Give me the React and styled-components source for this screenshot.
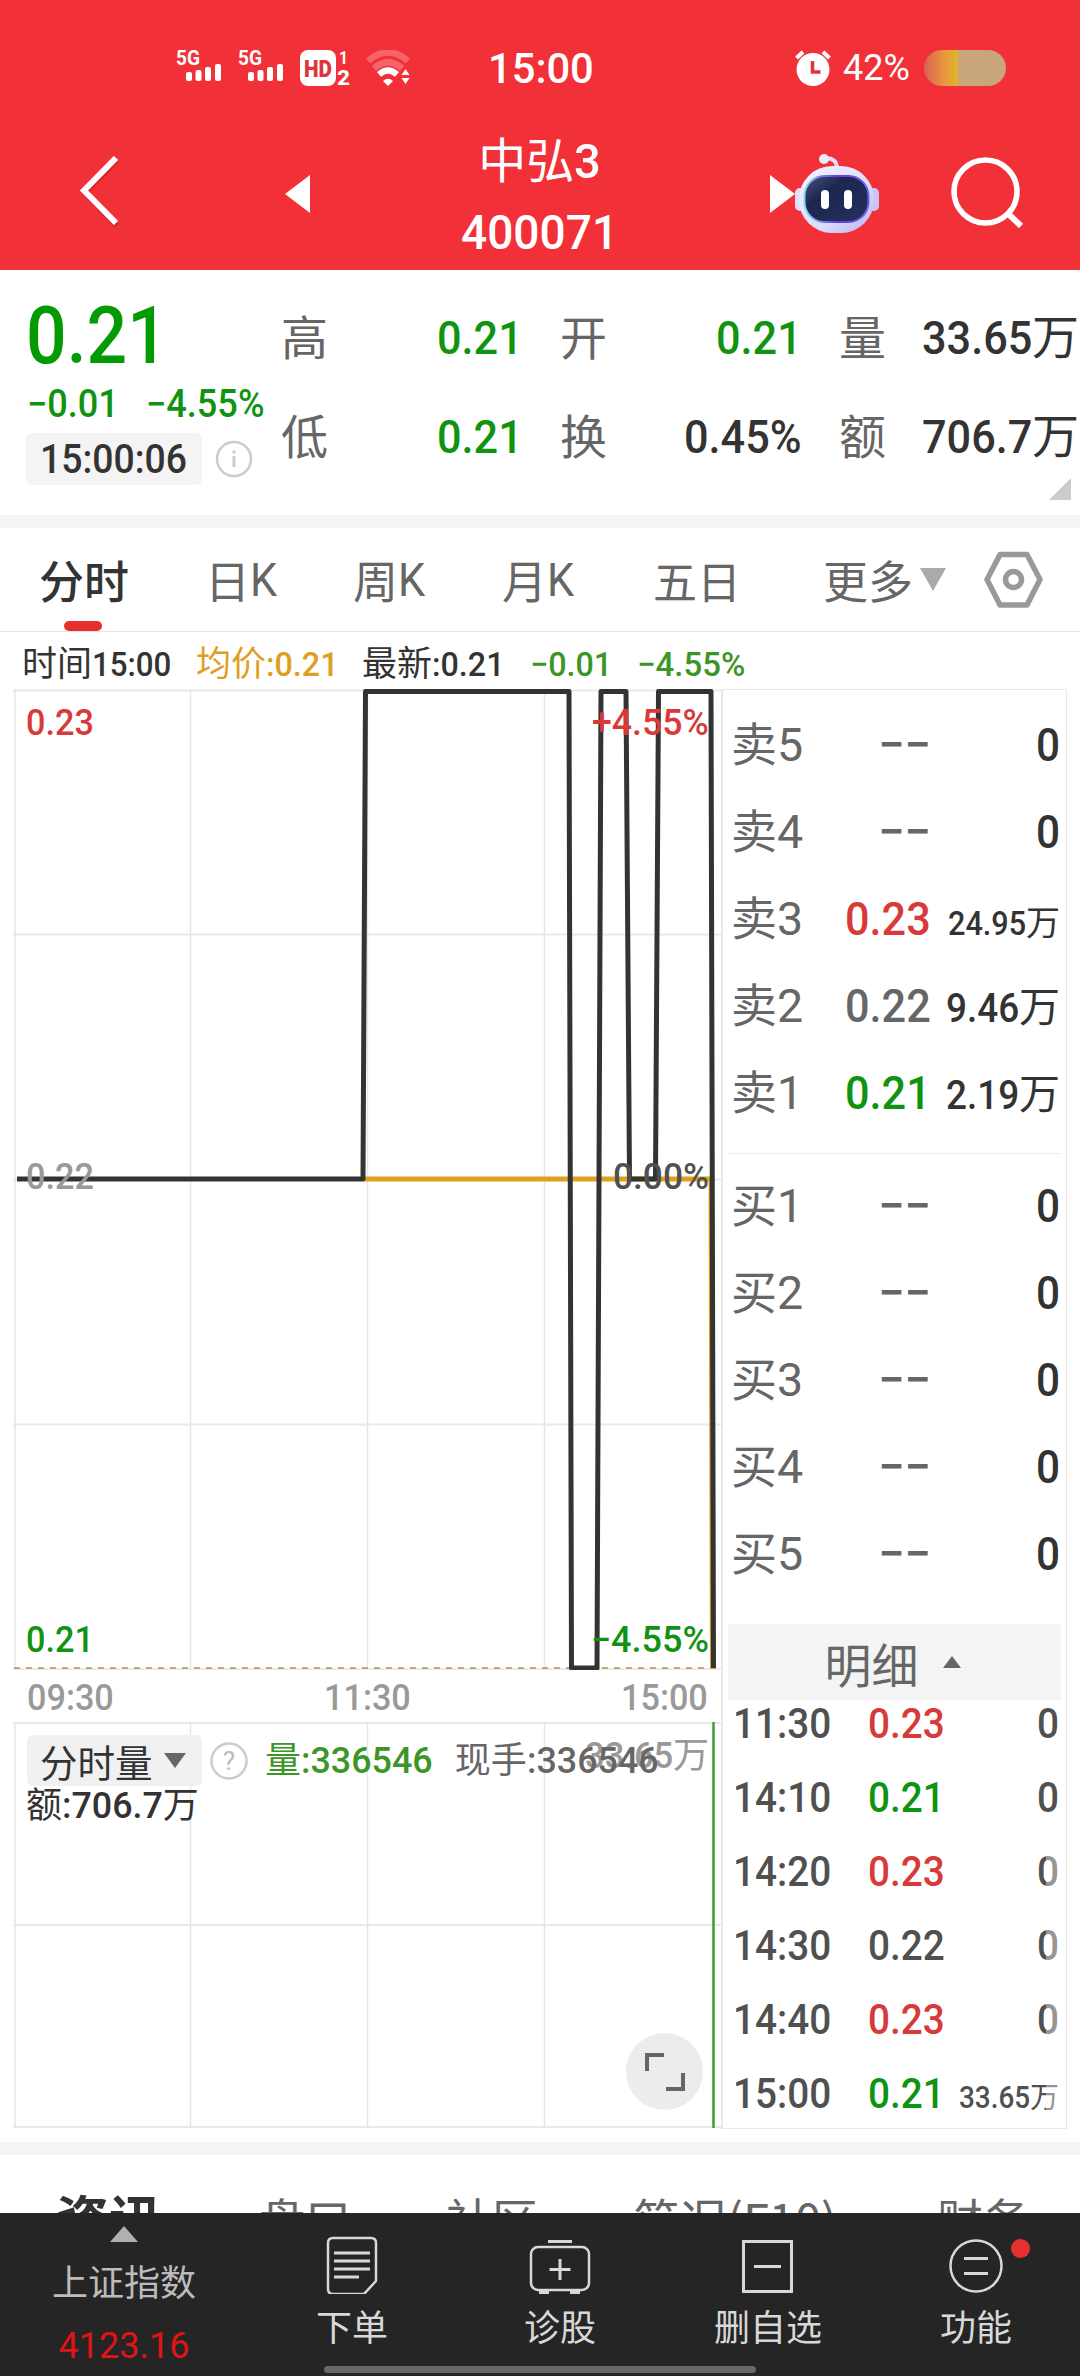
import React from 'react';
import styled, { createGlobalStyle } from 'styled-components';

const GlobalStyle = createGlobalStyle`
  * {
    box-sizing: border-box;
  }

  body {
    margin: 0;
    background: #fff;
    font-family: Roboto, 'Noto Sans CJK SC', sans-serif;
    color: #333;
  }
`;

const RED = '#d83a3a';
const GREEN = '#0f9310';
const SOFT_GREEN = '#3b9527';
const GRAY = '#666';

const Screen = styled.div`
  width: 1080px;
  height: 2376px;
  display: flex;
  flex-direction: column;
  overflow: hidden;
  background: #fff;
`;

// advance widths in em, used to give back the room a squeezed number leaves
const ADVANCE = { '.': 0.27, ':': 0.25, '%': 0.735 };
const emWidth = (text) => [...String(text)].reduce((sum, c) => sum + (ADVANCE[c] || 0.565), 0);

const Num = styled.span`
  display: inline-block;
  font-size: ${(p) => p.$size || 47}px;
  font-weight: ${(p) => p.$weight || 500};
  color: ${(p) => p.$color || 'inherit'};
  white-space: nowrap;
  transform: scaleX(${(p) => p.$k || 0.92});
  transform-origin: 0 50%;
  margin-right: ${(p) => (-emWidth(p.children) * (1 - (p.$k || 0.92))).toFixed(3)}em;
`;

const Cn = styled.span`
  font-family: 'Noto Sans CJK SC', sans-serif;
  font-size: ${(p) => p.$size || 47}px;
  font-weight: ${(p) => p.$weight || 400};
  line-height: 1;
  color: ${(p) => p.$color || 'inherit'};
  white-space: nowrap;
`;

const Pair = styled.div`
  color: ${(p) => p.$color || 'inherit'};
  white-space: nowrap;
`;

/* ---------- top ---------- */

const Top = styled.header`
  height: 270px;
  flex: none;
  background: #f13038;
  color: #fff;
`;

const StatusBar = styled.div`
  height: 118px;
  padding: 18px 77px 0 176px;
  display: grid;
  grid-template-columns: 312px 307px 1fr;
  align-items: center;
`;

const StatusGroup = styled.div`
  display: flex;
  align-items: center;
`;

const Signal = styled.svg`
  width: 62px;
  height: 40px;
`;

const Battery = styled.div`
  width: 82px;
  height: 36px;
  margin-left: 14px;
  border-radius: 18px;
  background: linear-gradient(90deg, #d9605a 0, #e8963c 20px, #dfb72c 34px, #c9a57c 34px);
`;

const TitleBar = styled.div`
  height: 152px;
  display: grid;
  grid-template-columns: 285px 178px 153px 154px 310px;
  align-items: center;
`;

const TitleText = styled.div`
  display: flex;
  flex-direction: column;
  align-items: center;
  line-height: 71px;
  padding-top: 6px;
`;

const TitleLine = styled.div`
  height: 71px;
  white-space: nowrap;
`;

const TitleIcons = styled.div`
  display: flex;
  align-items: center;
`;

/* ---------- quote ---------- */

const Quote = styled.section`
  height: 245px;
  flex: none;
  display: flex;
  position: relative;
`;

const PriceColumn = styled.div`
  width: 281px;
  padding: 28px 0 0 26px;
`;

const BigPrice = styled.div`
  height: 76px;
  line-height: 76px;
`;

const Changes = styled.div`
  display: flex;
  gap: 27px;
  height: 59px;
  line-height: 60px;
  padding-left: 1px;
`;

const ClockRow = styled.div`
  display: flex;
  align-items: center;
`;

const ClockChip = styled.div`
  width: 176px;
  height: 52px;
  line-height: 53px;
  text-align: center;
  border-radius: 6px;
  background: #f4f4f4;
`;

const Stats = styled.div`
  flex: 1;
  padding-top: 18px;
  display: grid;
  grid-template-columns: 242px 242px 240px;
  grid-template-rows: 99px 99px;
  column-gap: 37px;
`;

const Stat = styled.div`
  display: flex;
  justify-content: space-between;
  align-items: center;

  > ${Cn} {
    margin-top: -6px;
  }
`;

const Corner = styled.div`
  position: absolute;
  right: 9px;
  bottom: 15px;
  border-left: 22px solid transparent;
  border-bottom: 22px solid #ccc;
`;

const Divider = styled.div`
  height: 13px;
  flex: none;
  background: #f4f4f4;
`;

/* ---------- period tabs ---------- */

const Tabs = styled.nav`
  height: 104px;
  flex: none;
  display: grid;
  grid-template-columns: 166px 148px 149px 151px 170px 161px 1fr;
  padding-left: 39px;
  border-bottom: 1px solid #e5e5e5;
  white-space: nowrap;
`;

const Tab = styled.div`
  position: relative;
  display: flex;
  align-items: center;
  color: ${(p) => (p.$active ? '#333' : GRAY)};

  &::after {
    content: '';
    display: ${(p) => (p.$active ? 'block' : 'none')};
    position: absolute;
    left: 25px;
    bottom: 0;
    width: 38px;
    height: 10px;
    border-radius: 5px;
    background: #e63030;
  }
`;

const Down = styled.i`
  border-left: ${(p) => p.$w / 2}px solid transparent;
  border-right: ${(p) => p.$w / 2}px solid transparent;
  border-top: ${(p) => p.$h}px solid ${(p) => p.$color};
`;

const Up = styled.i`
  border-left: ${(p) => p.$w / 2}px solid transparent;
  border-right: ${(p) => p.$w / 2}px solid transparent;
  border-bottom: ${(p) => p.$h}px solid ${(p) => p.$color};
`;

const Summary = styled.div`
  height: 57px;
  flex: none;
  padding: 6px 0 0 22px;
  display: grid;
  grid-template-columns: 174px 166px 168px 107px 1fr;
  align-items: center;
  white-space: nowrap;
`;

/* ---------- chart + order book ---------- */

const Board = styled.section`
  height: 1453px;
  flex: none;
  display: flex;
  padding: 0 13px;
`;

const Charts = styled.div`
  width: 708px;
  position: relative;
`;

const ChartSvg = styled.svg`
  display: block;
  width: 708px;
  height: ${(p) => p.$h}px;
`;

const TimeAxis = styled.div`
  height: 52px;
  padding: 3px 13px 0 14px;
  display: flex;
  justify-content: space-between;
  align-items: center;
  color: #999;
`;

const ChartLabel = styled.div`
  position: absolute;
  ${(p) => (p.$right ? 'right: 12px' : 'left: 13px')};
  top: ${(p) => p.$top}px;
  height: 50px;
  line-height: 50px;
  color: ${(p) => p.$color || 'inherit'};
  white-space: nowrap;
`;

const VolumeHead = styled.div`
  position: absolute;
  left: 14px;
  top: 1046px;
  height: 51px;
  display: flex;
  align-items: center;
  white-space: nowrap;
`;

const TypeChip = styled.div`
  width: 175px;
  height: 51px;
  padding-left: 13px;
  display: flex;
  align-items: center;
  gap: 11px;
  border-radius: 6px;
  background: #f1f1f1;
`;

const Expand = styled.div`
  position: absolute;
  left: 613px;
  top: 1344px;
  width: 77px;
  height: 77px;
  display: grid;
  place-items: center;
  border-radius: 50%;
  background: #ececec;
`;

const Book = styled.div`
  width: 346px;
  height: 1440px;
  border: 1px solid #e8e8e8;
  border-left: 2px solid #e8e8e8;
  padding: 11px 5px 0;
`;

const Side = styled.div`
  height: 453px;
  margin-bottom: ${(p) => (p.$line ? '8px' : '9px')};
  border-bottom: ${(p) => (p.$line ? '1px solid #ececec' : '0')};
`;

const Cell = styled.div`
  text-align: ${(p) => (p.$right ? 'right' : 'left')};
`;

const Level = styled.div`
  height: 87px;
  line-height: 87px;
  padding: 0 1px 0 3px;
  display: grid;
  grid-template-columns: 108px 92px 1fr;
  align-items: baseline;
  white-space: nowrap;
`;

const DetailBar = styled.div`
  height: 76px;
  display: flex;
  align-items: center;
  justify-content: center;
  gap: 24px;
  padding-right: 4px;
  background: #f4f4f4;
`;

const Ticks = styled.div`
  position: relative;
  height: 428px;
  overflow: hidden;

  &::after {
    content: '';
    position: absolute;
    right: 0;
    top: 130px;
    bottom: 0;
    width: 15px;
    background: rgba(255, 255, 255, 0.4);
  }
`;

const Tick = styled.div`
  height: 74px;
  line-height: 74px;
  padding: 0 2px 0 5px;
  margin-top: ${(p) => (p.$first ? '-14px' : '0')};
  display: grid;
  grid-template-columns: 135px 76px 1fr;
  align-items: baseline;
  color: #505050;
  white-space: nowrap;
`;

/* ---------- bottom ---------- */

const NewsTabs = styled.div`
  height: 58px;
  flex: none;
  overflow: hidden;
  padding: 39px 0 0 56px;
  display: grid;
  grid-template-columns: 203px 187px 187px 304px 1fr;
  color: ${GRAY};

  > ${Cn}:first-child {
    margin-top: -3px;
  }
`;

const BottomNav = styled.footer`
  position: relative;
  height: 163px;
  flex: none;
  display: grid;
  grid-template-columns: 248px repeat(4, 208px);
  background: #252525;
`;

const IndexCell = styled.div`
  display: flex;
  flex-direction: column;
  align-items: center;
  padding-top: 13px;
`;

const NavCell = styled.div`
  position: relative;
  display: flex;
  flex-direction: column;
  align-items: center;
  padding-top: 21px;
  gap: 13px;
  color: #d8d8d8;
`;

const Dot = styled.i`
  position: absolute;
  left: 139px;
  top: 26px;
  width: 19px;
  height: 19px;
  border-radius: 50%;
  background: #e63030;
`;

const HomeBar = styled.div`
  position: absolute;
  left: 324px;
  bottom: 3px;
  width: 432px;
  height: 7px;
  border-radius: 4px;
  background: #676767;
`;

const IndexName = styled.div`
  margin-top: 18px;
  height: 40px;
  display: flex;
  align-items: center;
`;

const IndexValue = styled.div`
  margin-top: 14px;
  height: 64px;
  line-height: 64px;
`;

function SignalIcon() {
  return (
    <Signal viewBox="0 0 62 40" fill="#fff">
      <text x="0" y="17" fontSize="20" fontWeight="700" textLength="24" lengthAdjust="spacingAndGlyphs">5G</text>
      <rect x="10" y="24" width="6" height="9" rx="2" />
      <rect x="19.5" y="22" width="6" height="11" rx="2" />
      <rect x="29" y="19" width="6" height="14" rx="2" />
      <rect x="39" y="16" width="6" height="17" rx="2" />
    </Signal>
  );
}

function HdIcon() {
  return (
    <svg width="52" height="36" viewBox="1 0 52 36" fill="#fff">
      <rect x="1" width="36" height="36" rx="8" />
      <text x="5" y="26.5" fontSize="23" fontWeight="900" fill="#e0343c" textLength="28" lengthAdjust="spacingAndGlyphs">HD</text>
      <text x="40" y="14" fontSize="19" fontWeight="700" textLength="9" lengthAdjust="spacingAndGlyphs">1</text>
      <text x="38" y="35" fontSize="21" fontWeight="800" textLength="13" lengthAdjust="spacingAndGlyphs">2</text>
    </svg>
  );
}

function WifiIcon() {
  return (
    <svg width="44" height="36" viewBox="0 0 44 36" fill="none">
      <path d="M2 11Q22 -6 42 11" stroke="#fff" strokeOpacity=".25" strokeWidth="6.5" />
      <path d="M8 18.500Q22 6 36 18.500" stroke="#fff" strokeOpacity=".25" strokeWidth="6.5" />
      <path d="M13 24.500Q22 16.500 31 24.500" stroke="#fff" strokeWidth="6" />
      <path d="M17 31Q22 26.500 27 31L22 36z" fill="#fff" />
      <path d="M35.500 25l4-6 4 6zM35.500 28h8l-4 6z" fill="#fff" />
    </svg>
  );
}

function AlarmIcon() {
  return (
    <svg width="36" height="36" viewBox="0 0 36 36">
      <circle cx="18" cy="19.500" r="16.500" fill="#fff" />
      <path d="M1.500 8L8 2M34.500 8L28 2" stroke="#fff" strokeWidth="4" />
      <path d="M17.500 11v11h8" fill="none" stroke="#e0343c" strokeWidth="3.500" />
    </svg>
  );
}

function Robot() {
  return (
    <svg width="86" height="82" viewBox="3 4 86 82">
      <defs>
        <linearGradient id="shell" x1="0" y1="0" x2="1" y2="1">
          <stop offset="0" stopColor="#f6f4ff" />
          <stop offset=".6" stopColor="#dcdcfb" />
          <stop offset="1" stopColor="#b9b4f2" />
        </linearGradient>
        <linearGradient id="rim" x1="0" y1="0" x2="1" y2="0">
          <stop offset="0" stopColor="#7fdcee" />
          <stop offset=".5" stopColor="#6a36d8" />
          <stop offset="1" stopColor="#6f62e8" />
        </linearGradient>
        <linearGradient id="face" x1="0" y1="0" x2="1" y2="1">
          <stop offset="0" stopColor="#4a5380" />
          <stop offset=".35" stopColor="#1c2750" />
          <stop offset="1" stopColor="#26305c" />
        </linearGradient>
      </defs>
      <path d="M32 9.500Q45 8 45 20" fill="none" stroke="#e4defa" strokeWidth="4" />
      <circle cx="32" cy="10" r="5" fill="#eeeafc" />
      <rect x="3" y="39" width="10" height="23" rx="5" fill="#e2e0fb" />
      <rect x="76" y="39" width="11" height="23" rx="5" fill="#c9c4f5" />
      <rect x="7" y="17" width="75" height="67" rx="33" fill="url(#shell)" />
      <rect x="12.500" y="27" width="64" height="46" rx="20" fill="url(#face)" stroke="url(#rim)" strokeWidth="2" />
      <rect x="29" y="41" width="8" height="19" rx="4" fill="#fff" />
      <rect x="52" y="41" width="8" height="19" rx="4" fill="#fff" />
    </svg>
  );
}

const stats = [
  ['高', '0.21', '', GREEN],
  ['开', '0.21', '', GREEN],
  ['量', '33.65', '万', '#333'],
  ['低', '0.21', '', GREEN],
  ['换', '0.45%', '', '#333'],
  ['额', '706.7', '万', '#333'],
];

const sells = [
  ['卖', '5', '−−', GRAY, '0'],
  ['卖', '4', '−−', GRAY, '0'],
  ['卖', '3', '0.23', RED, '24.95', 34],
  ['卖', '2', '0.22', GRAY, '9.46', 41],
  ['卖', '1', '0.21', GREEN, '2.19', 41],
];

const buys = ['1', '2', '3', '4', '5'].map((n) => ['买', n, '−−', GRAY, '0']);

const ticks = [
  ['11:30', '0.23', RED, '0'],
  ['14:10', '0.21', GREEN, '0'],
  ['14:20', '0.23', RED, '0'],
  ['14:30', '0.22', '#505050', '0'],
  ['14:40', '0.23', RED, '0'],
  ['15:00', '0.21', GREEN, '33.65'],
];

function Levels({ rows, line }) {
  return (
    <Side $line={line}>
      {rows.map(([side, n, price, color, vol, size]) => (
        <Level key={side + n}>
          <Cell>
            <Cn $size={46} $color={GRAY}>{side}</Cn>
            <Num $weight={400} $k={0.99} $color={GRAY}>{n}</Num>
          </Cell>
          <Cell $right><Num $k={price === '−−' ? 1 : 0.92} $color={color}>{price}</Num></Cell>
          <Cell $right>
            <Num $size={size} $k={0.9}>{vol}</Num>
            {size && <Cn $size={size}>万</Cn>}
          </Cell>
        </Level>
      ))}
    </Side>
  );
}

function PriceChart() {
  return (
    <ChartSvg $h={981} viewBox="13 690 708 981" fill="none">
      <path d="M13 691.500h708M13 935.500h708M13 1180.500h708M13 1425.500h708M13 1670h708" stroke="#e9e9e9" strokeWidth="2" />
      <path d="M15 690v981M190.500 690v981M367.500 690v981M544.500 690v981" stroke="#e6e6e6" strokeWidth="1.500" />
      <path d="M14 1669h708" stroke="#c9a57c" strokeWidth="2" strokeDasharray="6 6" />
      <path d="M363 1180H711L712.500 1669" stroke="#e0a01c" strokeWidth="5" />
      <path
        d="M17 1180H363L365.500 692.500H569L571.500 1669H597L601 692.500H626L629.500 1180H655.500L658.500 692.500H711L713.500 1669"
        stroke="#333"
        strokeWidth="5"
        strokeLinejoin="round"
      />
    </ChartSvg>
  );
}

function VolumeChart() {
  return (
    <ChartSvg $h={407} viewBox="13 1723 708 407" fill="none">
      <path d="M13 1724h708M13 1926h708M13 2128h708" stroke="#e9e9e9" strokeWidth="2" />
      <path d="M15 1723v406M190.500 1723v406M367.500 1723v406M544.500 1723v406" stroke="#e6e6e6" strokeWidth="1.500" />
      <path d="M713.500 1723v406" stroke="#3f9a34" strokeWidth="2.500" />
    </ChartSvg>
  );
}

function App() {
  return (
    <Screen>
      <GlobalStyle />
      <Top>
        <StatusBar>
          <StatusGroup>
            <SignalIcon />
            <SignalIcon />
            <HdIcon />
            <svg width="14" height="1" />
            <WifiIcon />
          </StatusGroup>
          <div><Num $size={43} $k={0.97}>15:00</Num></div>
          <StatusGroup>
            <AlarmIcon />
            <svg width="12" height="1" />
            <Num $size={36} $weight={400} $k={1}>42%</Num>
            <Battery />
          </StatusGroup>
        </StatusBar>
        <TitleBar>
          <svg width="120" height="76" viewBox="-73 2 120 76" fill="none">
            <path d="M44 6L12 38.500 44 72" stroke="#a01820" strokeOpacity=".35" strokeWidth="6" />
            <path d="M43 4L11 36.500 43 69" stroke="#fff" strokeWidth="6" />
          </svg>
          <svg width="25" height="38" viewBox="0 0 25 38"><path d="M0 19L25 0v38z" fill="#fff" /></svg>
          <TitleText>
            <TitleLine><Cn $size={48}>中弘</Cn><Num $size={49} $k={0.96}>3</Num></TitleLine>
            <TitleLine><Num $size={49} $k={0.94}>400071</Num></TitleLine>
          </TitleText>
          <i />
          <TitleIcons>
            <svg width="25" height="38" viewBox="0 0 25 38"><path d="M25 19L0 0v38z" fill="#fff" /></svg>
            <Robot />
            <svg width="150" height="76" viewBox="-70 1.500 150 76" fill="none" stroke="#fff" strokeWidth="5.500">
              <circle cx="34.500" cy="37" r="31.500" />
              <path d="M57 59L70 71.500" strokeWidth="6" />
            </svg>
          </TitleIcons>
        </TitleBar>
      </Top>

      <Quote>
        <PriceColumn>
          <BigPrice><Num $size={79} $k={0.905} $color="#049a04">0.21</Num></BigPrice>
          <Changes>
            <Num $size={38} $k={0.95} $color={GREEN}>−0.01</Num>
            <Num $size={38} $k={0.95} $color={GREEN}>−4.55%</Num>
          </Changes>
          <ClockRow>
            <ClockChip><Num $size={41} $k={0.91}>15:00:06</Num></ClockChip>
            <svg width="64" height="38" viewBox="-13 0 64 38" fill="none" stroke="#ccc">
              <circle cx="19" cy="19" r="17" strokeWidth="2.500" />
              <path d="M19 16v11M19 10.500v3" strokeWidth="3" />
            </svg>
          </ClockRow>
        </PriceColumn>
        <Stats>
          {stats.map(([label, value, unit, color]) => (
            <Stat key={label}>
              <Cn $color={GRAY}>{label}</Cn>
              <Pair $color={color}><Num>{value}</Num>{unit && <Cn>{unit}</Cn>}</Pair>
            </Stat>
          ))}
        </Stats>
        <Corner />
      </Quote>
      <Divider />

      <Tabs>
        <Tab $active><Cn $size={45} $weight={500}>分时</Cn></Tab>
        {['日', '周', '月'].map((t) => (
          <Tab key={t}><Cn $size={45}>{t}</Cn><Num $size={46} $weight={400} $k={0.94}>K</Num></Tab>
        ))}
        <Tab><Cn $size={44}>五日</Cn></Tab>
        <Tab><Cn $size={45}>更多</Cn><svg width="7" height="1" /><Down $w={27} $h={23} $color="#aaa" /></Tab>
        <Tab>
          <svg width="60" height="58" viewBox="0 0 60 58" fill="none" stroke="#999" strokeLinejoin="round">
            <path d="M16 3.500h27L56 28.500 43 54H16L3 28.500z" strokeWidth="5.500" />
            <circle cx="29.500" cy="28.500" r="8" strokeWidth="5.500" />
          </svg>
        </Tab>
      </Tabs>

      <Summary>
        <Pair><Cn $size={35}>时间</Cn><Num $size={34}>15:00</Num></Pair>
        <Pair $color="#dd9f22"><Cn $size={35}>均价</Cn><Num $size={34} $k={0.95}>:0.21</Num></Pair>
        <Pair><Cn $size={35}>最新</Cn><Num $size={34} $k={0.95}>:0.21</Num></Pair>
        <Pair $color={SOFT_GREEN}><Num $size={34} $k={0.95}>−0.01</Num></Pair>
        <Pair $color={SOFT_GREEN}><Num $size={34} $k={0.97}>−4.55%</Num></Pair>
      </Summary>

      <Board>
        <Charts>
          <PriceChart />
          <TimeAxis>
            <Num $size={36} $k={0.95}>09:30</Num>
            <Num $size={36} $k={0.95}>11:30</Num>
            <Num $size={36} $k={0.95}>15:00</Num>
          </TimeAxis>
          <VolumeChart />
          <ChartLabel $top={9} $color={RED}><Num $size={36} $k={0.95}>0.23</Num></ChartLabel>
          <ChartLabel $top={9} $color={RED} $right><Num $size={36} $k={0.99}>+4.55%</Num></ChartLabel>
          <ChartLabel $top={463} $color="#999"><Num $size={36} $k={0.95}>0.22</Num></ChartLabel>
          <ChartLabel $top={463} $color="#505050" $right><Num $size={36} $k={0.98}>0.00%</Num></ChartLabel>
          <ChartLabel $top={926} $color={GREEN}><Num $size={36} $k={0.95}>0.21</Num></ChartLabel>
          <ChartLabel $top={926} $color={GREEN} $right><Num $size={36} $k={1}>−4.55%</Num></ChartLabel>
          <ChartLabel $top={1042} $color="#999" $right><Num $size={36} $k={0.96}>33.65</Num><Cn $size={36}>万</Cn></ChartLabel>
          <VolumeHead>
            <TypeChip><Cn $size={37.5}>分时量</Cn><Down $w={22} $h={15} $color={GRAY} /></TypeChip>
            <svg width="63" height="38" viewBox="-8 0 63 38">
              <circle cx="19" cy="19" r="17.500" fill="none" stroke="#ccc" strokeWidth="2.500" />
              <text x="19" y="28" fontSize="26" fill="#bbb" textAnchor="middle">?</text>
            </svg>
            <Pair $color={SOFT_GREEN}><Cn $size={36}>量</Cn><Num $size={36} $k={0.995}>:336546</Num></Pair>
            <svg width="22" height="1" />
            <Pair $color={GRAY}><Cn $size={36}>现手</Cn><Num $size={36} $k={0.995}>:336546</Num></Pair>
          </VolumeHead>
          <ChartLabel $top={1092}><Cn $size={36}>额</Cn><Num $size={36} $k={0.995}>:706.7</Num><Cn $size={36}>万</Cn></ChartLabel>
          <Expand>
            <svg width="42" height="42" viewBox="0 0 42 42" fill="none" stroke={GRAY} strokeWidth="4">
              <path d="M3 20V4h17M22 38h17V22" />
            </svg>
          </Expand>
        </Charts>
        <Book>
          <Levels rows={sells} line />
          <Levels rows={buys} />
          <DetailBar>
            <Cn $size={47} $color={GRAY}>明细</Cn>
            <Up $w={18} $h={12} $color={GRAY} />
          </DetailBar>
          <Ticks>
            {ticks.map(([time, price, color, vol], i) => (
              <Tick key={time} $first={i === 0}>
                <Cell><Num $size={43} $k={0.9}>{time}</Num></Cell>
                <Cell><Num $size={43} $k={0.9} $color={color}>{price}</Num></Cell>
                <Cell $right>
                  <Num $size={vol === '0' ? 43 : 31} $k={0.9}>{vol}</Num>
                  {vol !== '0' && <Cn $size={29}>万</Cn>}
                </Cell>
              </Tick>
            ))}
          </Ticks>
        </Book>
      </Board>
      <Divider />

      <NewsTabs>
        <Cn $size={53} $weight={700} $color="#333">资讯</Cn>
        <Cn $size={46}>盘口</Cn>
        <Cn $size={46}>社区</Cn>
        <Cn $size={47}>简况(F10)</Cn>
        <Cn $size={46}>财务</Cn>
      </NewsTabs>

      <BottomNav>
        <IndexCell>
          <Up $w={28} $h={16} $color="#b0b0b0" />
          <IndexName><Cn $size={36} $color="#bcbcbc">上证指数</Cn></IndexName>
          <IndexValue><Num $size={36} $weight={400} $k={1} $color="#e01414">4123.16</Num></IndexValue>
        </IndexCell>
        <NavCell>
          <svg width="60" height="60" viewBox="0 0 60 60" fill="none" stroke="currentColor" strokeWidth="2.500">
            <path d="M11 4h38q5 0 5 5v38L42 60H11q-5 0-5-5V9q0-5 5-5z" strokeLinejoin="round" />
            <path d="M12 19h36M12 27h36M12 35h36M12 43h25" strokeWidth="3" />
          </svg>
          <Cn $size={36}>下单</Cn>
        </NavCell>
        <NavCell>
          <svg width="62" height="60" viewBox="0 0 62 60" fill="none" stroke="currentColor" strokeWidth="2.500">
            <rect x="2" y="13" width="58" height="43" rx="7" />
            <path d="M19 7.500h24M20.500 35.500h21M31 25v21M10 58.500h10M41 58.500h10" strokeWidth="3" />
          </svg>
          <Cn $size={36}>诊股</Cn>
        </NavCell>
        <NavCell>
          <svg width="60" height="60" viewBox="0 0 60 60" fill="none" stroke="currentColor" strokeWidth="3">
            <path d="M5.500 7.500h48v50h-48zM16 32.500h27" />
          </svg>
          <Cn $size={36}>删自选</Cn>
        </NavCell>
        <NavCell>
          <svg width="60" height="60" viewBox="0 0 60 60" fill="none" stroke="currentColor" strokeWidth="2.500">
            <circle cx="30" cy="32" r="25.500" />
            <path d="M18 24.500h24M18 39.500h24" strokeWidth="3" />
          </svg>
          <Cn $size={36}>功能</Cn>
          <Dot />
        </NavCell>
        <HomeBar />
      </BottomNav>
    </Screen>
  );
}

export default App;
